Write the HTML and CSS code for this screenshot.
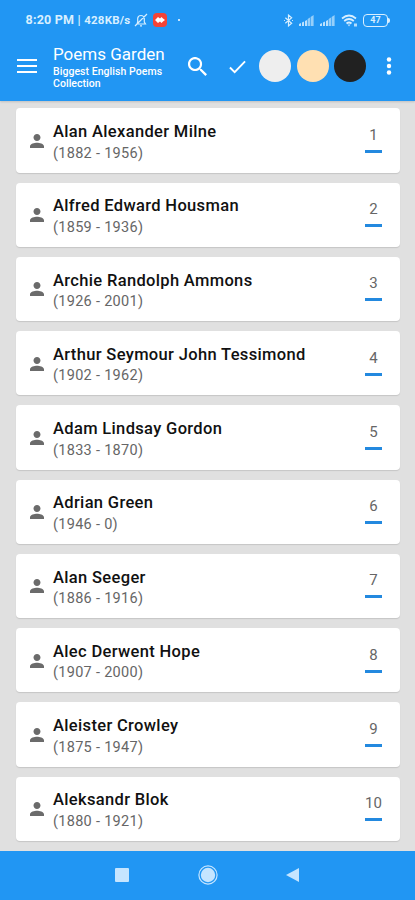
FILE: index.html
```html
<!DOCTYPE html>
<html lang="en">
<head>
<meta charset="utf-8">
<title>Poems Garden</title>
<link rel="stylesheet" href="styles.css">
</head>
<body>
<svg class="defs" width="0" height="0">
  <symbol id="person" viewBox="4 4 16 16"><path d="M12 12c2.200 0 4-1.800 4-4s-1.800-4-4-4-4 1.800-4 4 1.800 4 4 4zm0 2c-2.700 0-8 1.300-8 4v2h16v-2c0-2.700-5.300-4-8-4z"/></symbol>
  <symbol id="signal" viewBox="0 0 15 11"><path d="M0 11V9l2-1v3zM3 11V7.500l2-1V11zM6 11V6l2-1v6z"/><path opacity=".75" d="M8.600 11V4l2.400-1.500V11zM11.600 11V2l3-2v11z"/></symbol>
</svg>
<div class="screen">
  <header class="top">
    <div class="status">
      <span class="clock">8:20 PM | <span class="rate">428KB/s</span></span>
      <svg class="bell" viewBox="0 0 14 14"><path d="M3 11h8.500L10.300 9V5.500C10 3.500 8.800 2.500 7 2.500S3.800 3.800 3.700 5.500V9zM6 12.800h2M1 13L13 1"/></svg>
      <svg class="badge" viewBox="0 0 14 14"><rect width="14" height="14" rx="4" fill="#f44336"/><path d="M2 7l3-3 2 1.500L8.500 4l1.500 1.500L12 7l-2 1.500L8.500 10 7 8.500 5 10z" fill="#fff"/></svg>
      <span class="dot"></span>
      <svg class="bt" viewBox="0 0 10 14"><path d="M1.500 4l7 6L5 13V1l3.500 3-7 6M0 7h1M9 7h1"/></svg>
      <svg class="sig"><use href="#signal"/></svg>
      <svg class="sig two"><use href="#signal"/></svg>
      <svg class="wifi" viewBox="0 0 17 13"><path d="M1 4.500Q8 -1.500 15 4.500M3.200 7q4.800-4 9.600 0M5.500 9.500q2.500-2 5 0" fill="none" stroke="currentColor" stroke-width="1.700"/><path d="M6.500 10.500h3L8 12.500zM13 9.500h3v3h-3z" opacity=".8"/></svg>
      <span class="battery">47</span>
    </div>
    <div class="appbar">
      <svg class="menu" viewBox="0 0 20 14"><path d="M0 1h20M0 7h20M0 13h20"/></svg>
      <div class="heading">
        <h1>Poems Garden</h1>
        <p>Biggest English Poems<br>Collection</p>
      </div>
      <svg class="search" viewBox="3 3 17.500 17.500"><path d="M15.500 14h-.800l-.300-.300A6.500 6.500 0 1 0 13.700 14.400l.300.300v.800l5 5 1.500-1.500zm-6 0a4.500 4.500 0 1 1 0-9 4.500 4.500 0 0 1 0 9z"/></svg>
      <svg class="check" viewBox="0 0 18 14"><path d="M1 7.500l5 5L17 1"/></svg>
      <div class="themes"><i class="light"></i><i class="sepia"></i><i class="dark"></i></div>
      <svg class="more" viewBox="0 0 6 18"><circle cx="3" cy="2.500" r="2.200"/><circle cx="3" cy="9" r="2.200"/><circle cx="3" cy="15.500" r="2.200"/></svg>
    </div>
  </header>
  <main class="list">
    <article class="card"><svg class="person"><use href="#person"/></svg><div class="poet"><h2>Alan Alexander Milne</h2><p>(1882 - 1956)</p></div><span class="num">1</span></article>
    <article class="card"><svg class="person"><use href="#person"/></svg><div class="poet"><h2>Alfred Edward Housman</h2><p>(1859 - 1936)</p></div><span class="num">2</span></article>
    <article class="card"><svg class="person"><use href="#person"/></svg><div class="poet"><h2>Archie Randolph Ammons</h2><p>(1926 - 2001)</p></div><span class="num">3</span></article>
    <article class="card"><svg class="person"><use href="#person"/></svg><div class="poet"><h2>Arthur Seymour John Tessimond</h2><p>(1902 - 1962)</p></div><span class="num">4</span></article>
    <article class="card"><svg class="person"><use href="#person"/></svg><div class="poet"><h2>Adam Lindsay Gordon</h2><p>(1833 - 1870)</p></div><span class="num">5</span></article>
    <article class="card"><svg class="person"><use href="#person"/></svg><div class="poet"><h2>Adrian Green</h2><p>(1946 - 0)</p></div><span class="num">6</span></article>
    <article class="card"><svg class="person"><use href="#person"/></svg><div class="poet"><h2>Alan Seeger</h2><p>(1886 - 1916)</p></div><span class="num">7</span></article>
    <article class="card"><svg class="person"><use href="#person"/></svg><div class="poet"><h2>Alec Derwent Hope</h2><p>(1907 - 2000)</p></div><span class="num">8</span></article>
    <article class="card"><svg class="person"><use href="#person"/></svg><div class="poet"><h2>Aleister Crowley</h2><p>(1875 - 1947)</p></div><span class="num">9</span></article>
    <article class="card"><svg class="person"><use href="#person"/></svg><div class="poet"><h2>Aleksandr Blok</h2><p>(1880 - 1921)</p></div><span class="num">10</span></article>
  </main>
  <nav class="nav">
    <svg class="recent" viewBox="0 0 14 14"><rect width="14" height="14" rx="1"/></svg>
    <svg class="home" viewBox="0 0 20 20"><circle cx="10" cy="10" r="7.200"/><circle cx="10" cy="10" r="9.100" fill="none" stroke="currentColor" stroke-width="1.200"/></svg>
    <svg class="back" viewBox="0 0 13 14"><path d="M0 7L13 0v14z"/></svg>
  </nav>
</div>
</body>
</html>
```
FILE: styles.css
```css
* { box-sizing: border-box; }
body { margin: 0; font-family: Roboto, "Liberation Sans", sans-serif; background: #e0e0e0; }
h1, h2, p { margin: 0; }
svg { display: block; flex: none; fill: currentColor; }
.defs { position: absolute; }
.screen { width: 415px; height: 900px; display: flex; flex-direction: column; overflow: hidden; }
.top { height: 100.5px; flex: none; background: #2196f3; color: #fff; box-shadow: 0 1px 2px rgba(0,0,0,.15); }
.status { height: 40px; display: flex; align-items: center; padding-left: 25.500px; color: #d8efff; }
.clock { width: 107px; font-size: 12.500px; font-weight: 700; line-height: 14px; letter-spacing: .22px; white-space: nowrap; }
.rate { font-size: 11.500px; }
.bell { width: 14px; height: 14px; margin-left: 1px; fill: none; stroke: currentColor; stroke-width: 1.200; }
.badge { width: 14px; height: 14px; margin-left: 5.500px; }
.dot { width: 2px; height: 2px; border-radius: 50%; background: #fff; margin-left: 11px; }
.bt { width: 9px; height: 13px; margin-left: 104px; fill: none; stroke: currentColor; stroke-width: 1.300; }
.sig { width: 15px; height: 11px; margin-left: 6px; opacity: .85; }
.two { margin-left: 6px; }
.wifi { width: 17px; height: 13px; margin-left: 6px; }
.battery { width: 25px; height: 13px; margin-left: 5px; border: 1.500px solid currentColor; border-radius: 4px; font-size: 9px; font-weight: 700; line-height: 11px; text-align: center; position: relative; }
.battery::after { content: ""; position: absolute; right: -3px; top: 3px; width: 2px; height: 5px; border-radius: 0 2px 2px 0; background: currentColor; }
.appbar { height: 60px; display: flex; align-items: center; padding: 0 0 8px 17px; }
.menu { width: 20px; height: 14px; stroke: currentColor; stroke-width: 2; }
.heading { width: 135px; margin: 2px 0 0 16px; }
h1 { font-size: 17px; font-weight: 400; line-height: 20px; letter-spacing: 0; white-space: nowrap; }
.heading p { font-size: 10.500px; font-weight: 500; line-height: 12.500px; letter-spacing: .05px; padding-top: 2px; white-space: nowrap; }
.search { width: 19px; height: 19px; }
.check { width: 17px; height: 14px; margin: 2px 0 0 22px; fill: none; stroke: currentColor; stroke-width: 2; }
.themes { display: flex; gap: 5.500px; margin-left: 13px; }
.themes i { width: 32px; height: 32px; border-radius: 50%; }
.light { background: #eee; }
.sepia { background: #ffe0b2; }
.dark { background: #212121; }
.more { width: 6px; height: 18px; margin-left: 20px; }
.list { height: 750px; flex: none; padding: 7.750px 15.500px 0 16px; display: flex; flex-direction: column; gap: 10px; }
.card { height: 64.250px; flex: none; display: flex; align-items: center; padding: 0 17.500px 0 14px; background: #fff; border-radius: 4px; box-shadow: 0 1px 1px rgba(0,0,0,.12); }
.person { width: 14px; height: 14px; margin-top: 1px; color: #6b6b6b; }
.poet { flex: 1; margin: 4px 0 0 9px; white-space: nowrap; }
h2 { font-size: 16.500px; font-weight: 500; line-height: 21.500px; letter-spacing: .34px; color: #111; }
.poet p { font-size: 14.500px; line-height: 21px; letter-spacing: .3px; color: #666; }
.num { width: 17px; height: 27px; display: flex; justify-content: center; font-size: 15px; line-height: 18px; color: #666; margin-top: -2px; background: linear-gradient(#2389df, #2389df) bottom / 100% 3px no-repeat; }
.nav { flex: 1; background: #2196f3; color: #c5e5ff; display: flex; align-items: center; padding: 0 0 0 115px; }
.recent { width: 14px; height: 14px; }
.home { width: 20px; height: 20px; margin-left: 69px; }
.back { width: 13px; height: 14px; margin-left: 68px; }
```
